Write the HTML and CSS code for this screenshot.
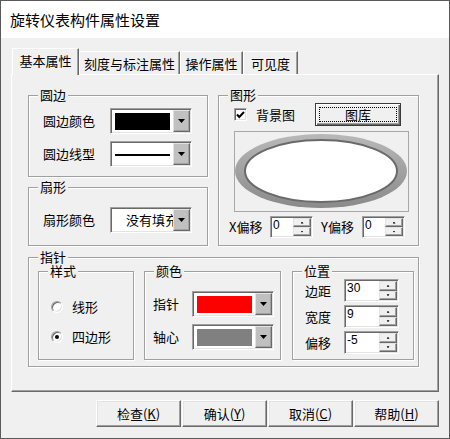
FILE: index.html
```html
<!DOCTYPE html>
<html lang="zh">
<head>
<meta charset="utf-8">
<title>旋转仪表构件属性设置</title>
<link rel="stylesheet" href="styles.css">
</head>
<body>
<div class="window">
  <div class="titlebar">旋转仪表构件属性设置</div>
  <div class="body">
    <div class="tabs">
      <div class="tab active t1">基本属性</div>
      <div class="tab t2">刻度与标注属性</div>
      <div class="tab t3">操作属性</div>
      <div class="tab t4">可见度</div>
    </div>
    <div class="panel">
      <div class="group g-rim">
        <span class="glabel">圆边</span>
        <div class="frow"><span class="flabel">圆边颜色</span>
          <div class="combo"><div class="cval"><span class="swatch sw-black"></span></div><span class="dd"></span></div>
        </div>
        <div class="frow"><span class="flabel">圆边线型</span>
          <div class="combo"><div class="cval cval-line"><span class="linestyle"></span></div><span class="dd"></span></div>
        </div>
      </div>

      <div class="group g-pic">
        <span class="glabel">图形</span>
        <div class="pic-row">
          <div class="chk-wrap"><span class="checkbox"><svg width="9" height="8" viewBox="0 0 9 8"><path d="M1 3.5 L3.3 6 L8 1" fill="none" stroke="#000" stroke-width="2"/></svg></span><span class="chk-label">背景图</span></div>
          <div class="btn-default">图库</div>
        </div>
        <div class="picframe">
          <svg width="173" height="79" viewBox="0 0 173 79">
            <defs>
              <linearGradient id="ring" x1="0" y1="0" x2="0" y2="1">
                <stop offset="0" stop-color="#b8b8b8"/>
                <stop offset="1" stop-color="#8a8a8a"/>
              </linearGradient>
            </defs>
            <ellipse cx="86" cy="39" rx="86" ry="37" fill="url(#ring)"/>
            <ellipse cx="86" cy="39" rx="76" ry="31" fill="#fff" stroke="#6a6a6a" stroke-width="2"/>
          </svg>
        </div>
        <div class="offset-row">
          <span class="olabel">X偏移</span>
          <div class="spin spin-sm"><span class="spin-val">0</span><span class="spin-btns"><span class="sb up"></span><span class="sb down"></span></span></div>
          <span class="olabel olabel-y">Y偏移</span>
          <div class="spin spin-sm"><span class="spin-val">0</span><span class="spin-btns"><span class="sb up"></span><span class="sb down"></span></span></div>
        </div>
      </div>

      <div class="group g-fan">
        <span class="glabel">扇形</span>
        <div class="frow"><span class="flabel">扇形颜色</span>
          <div class="combo"><div class="cval cval-text"><span class="ctext">没有填充</span></div><span class="dd"></span></div>
        </div>
      </div>

      <div class="group g-needle">
        <span class="glabel">指针</span>
        <div class="group sub s-style">
          <span class="glabel">样式</span>
          <div class="rrow"><span class="radio"></span><span>线形</span></div>
          <div class="rrow"><span class="radio on"></span><span>四边形</span></div>
        </div>
        <div class="group sub s-color">
          <span class="glabel">颜色</span>
          <div class="frow"><span class="flabel flabel-sm">指针</span>
            <div class="combo"><div class="cval"><span class="swatch sw-red"></span></div><span class="dd"></span></div>
          </div>
          <div class="frow"><span class="flabel flabel-sm">轴心</span>
            <div class="combo"><div class="cval"><span class="swatch sw-gray"></span></div><span class="dd"></span></div>
          </div>
        </div>
        <div class="group sub s-pos">
          <span class="glabel">位置</span>
          <div class="prow"><span class="flabel flabel-sm">边距</span>
            <div class="spin"><span class="spin-val">30</span><span class="spin-btns"><span class="sb up"></span><span class="sb down"></span></span></div>
          </div>
          <div class="prow"><span class="flabel flabel-sm">宽度</span>
            <div class="spin"><span class="spin-val">9</span><span class="spin-btns"><span class="sb up"></span><span class="sb down"></span></span></div>
          </div>
          <div class="prow"><span class="flabel flabel-sm">偏移</span>
            <div class="spin"><span class="spin-val">-5</span><span class="spin-btns"><span class="sb up"></span><span class="sb down"></span></span></div>
          </div>
        </div>
      </div>
    </div>
    <div class="buttons">
      <div class="btn">检查(<u>K</u>)</div>
      <div class="btn">确认(<u>Y</u>)</div>
      <div class="btn">取消(<u>C</u>)</div>
      <div class="btn">帮助(<u>H</u>)</div>
    </div>
  </div>
</div>
</body>
</html>
```

FILE: styles.css
```css
* { box-sizing: border-box; }
html, body { margin: 0; padding: 0; background: #f0f0f0; }
body {
  font-family: "Noto Sans CJK SC", "Liberation Sans", sans-serif;
  font-size: 13px;
  color: #000;
}
.window {
  width: 450px;
  height: 439px;
  border: 1px solid #5a5a5a;
  background: #f0f0f0;
  display: flex;
  flex-direction: column;
}
.titlebar {
  height: 37px;
  flex: none;
  background: #fff;
  display: flex;
  align-items: center;
  padding-left: 9px;
  font-size: 15px;
  padding-bottom: 1px;
}
.body {
  padding: 10px 10px 0 10px;
  display: flex;
  flex-direction: column;
}
/* tabs */
.tabs {
  display: flex;
  align-items: flex-end;
  height: 26px;
  padding-left: 1px;
  position: relative;
  z-index: 2;
}
.tab {
  height: 23px;
  display: flex;
  align-items: center;
  justify-content: center;
  line-height: 16px;
  border-top: 1px solid #fff;
  border-left: 1px solid #fff;
  border-right: 1px solid #696969;
  box-shadow: inset -1px 0 #a0a0a0;
  background: #f0f0f0;
  padding-top: 1px;
}
.tab.active {
  height: 27px;
  margin-bottom: -1px;
  padding-bottom: 3px;
}
.t1 { width: 67px; }
.t2 { width: 101px; }
.t3 { width: 63px; }
.t4 { width: 55px; }
.panel {
  height: 318px;
  border-top: 1px solid #fff;
  border-left: 1px solid #fff;
  border-right: 1px solid #696969;
  border-bottom: 1px solid #696969;
  box-shadow: inset -1px -1px #a0a0a0;
  padding: 20px 0 0 16px;
  display: grid;
  grid-template-columns: 180px 201px;
  grid-template-rows: 82px 59px 111px;
  column-gap: 10px;
  row-gap: 10px;
  align-content: start;
}
/* group boxes */
.group {
  position: relative;
  border: 1px solid #a0a0a0;
  box-shadow: 1px 1px 0 #fff, inset 1px 1px 0 #fff;
}
.glabel {
  position: absolute;
  top: -8px;
  left: 9px;
  padding: 0 2px;
  line-height: 14px;
  background: #f0f0f0;
}
.g-rim {
  grid-column: 1; grid-row: 1;
  padding: 12px 0 0 14px;
  display: flex; flex-direction: column; gap: 7px;
}
.g-fan {
  grid-column: 1; grid-row: 2;
  padding: 19px 0 0 14px;
}
.g-pic {
  grid-column: 2; grid-row: 1 / span 2;
  padding: 7px 0 0 10px;
}
.g-needle {
  grid-column: 1 / span 2; grid-row: 3;
  margin-top: 1px;
  padding: 13px 0 0 9px;
  display: flex;
  align-items: flex-start;
}
.sub { height: 89px; flex: none; }
.s-style { width: 96px; padding: 27px 0 0 12px; display: flex; flex-direction: column; gap: 14px; }
.s-color { width: 137px; margin-left: 10px; padding: 19px 0 0 8px; display: flex; flex-direction: column; gap: 7px; }
.s-pos { width: 122px; margin-left: 11px; padding: 7px 0 0 12px; display: flex; flex-direction: column; gap: 3px; }

.frow { display: flex; align-items: center; height: 26px; }
.flabel { width: 67px; line-height: 16px; flex: none; }
.flabel-sm { width: 39px; }
.prow { display: flex; align-items: center; height: 23px; }

/* combo */
.combo {
  width: 82px;
  height: 26px;
  display: flex;
  background: #fff;
  border: 1px solid;
  border-color: #a0a0a0 #fff #fff #a0a0a0;
  box-shadow: inset 1px 1px #696969, inset -1px -1px #e3e3e3;
  padding: 1px;
  flex: none;
}
.cval {
  flex: 1;
  display: flex;
  padding: 3px 3px 2px 3px;
  overflow: hidden;
}
.swatch { flex: 1; }
.sw-black { background: #000; }
.sw-red { background: #ff0000; }
.sw-gray { background: #808080; }
.cval-line { align-items: center; padding-top: 4px; }
.linestyle { flex: 1; height: 2px; background: #000; }
.cval-text { padding: 0 0 0 14px; align-items: center; white-space: nowrap; }
.ctext { line-height: 16px; }
.dd {
  width: 17px;
  height: 22px;
  flex: none;
  background: #c0c0c0;
  border: 1px solid;
  border-color: #e3e3e3 #696969 #696969 #e3e3e3;
  box-shadow: inset -1px -1px #a0a0a0;
  display: flex;
  align-items: center;
  justify-content: center;
}
.dd::after {
  content: "";
  width: 7px;
  height: 4px;
  background: #000;
  clip-path: polygon(0 0, 100% 0, 50% 100%);
}

/* spin edits */
.spin {
  width: 55px;
  height: 23px;
  display: flex;
  background: #fff;
  border: 1px solid;
  border-color: #a0a0a0 #fff #fff #a0a0a0;
  box-shadow: inset 1px 1px #696969, inset -1px -1px #e3e3e3;
  padding: 1px;
  flex: none;
}
.spin-sm { width: 43px; height: 22px; }
.spin-val {
  flex: 1;
  font-family: "Liberation Sans", sans-serif;
  font-size: 12px;
  line-height: 14px;
  padding-left: 1px;
}
.spin-btns { width: 18px; display: flex; flex-direction: column; flex: none; }
.sb {
  flex: 1;
  background: #f0f0f0;
  border: 1px solid;
  border-color: #e3e3e3 #696969 #696969 #e3e3e3;
  box-shadow: inset -1px -1px #a0a0a0;
  display: flex;
  align-items: center;
  justify-content: center;
}
.sb::after {
  content: "";
  width: 3px;
  height: 2px;
  background: #000;
}
.sb.up::after { clip-path: polygon(50% 0, 100% 100%, 0 100%); }
.sb.down::after { clip-path: polygon(0 0, 100% 0, 50% 100%); }

/* picture group */
.pic-row {
  display: flex;
  align-items: center;
  justify-content: space-between;
  width: 167px;
  height: 23px;
  margin-left: 5px;
}
.chk-wrap { display: flex; align-items: center; }
.checkbox {
  width: 13px;
  height: 13px;
  background: #fff;
  border: 1px solid;
  border-color: #a0a0a0 #fff #fff #a0a0a0;
  box-shadow: inset 1px 1px #696969, inset -1px -1px #e3e3e3;
  display: flex;
  align-items: center;
  justify-content: center;
}
.chk-label { margin-left: 9px; line-height: 16px; }
.btn-default {
  width: 86px;
  height: 23px;
  border: 1px solid #3a3a3a;
  box-shadow: inset 1px 1px #fff, inset -1px -1px #696969, inset -2px -2px #a0a0a0;
  display: flex;
  align-items: center;
  justify-content: center;
  position: relative;
  line-height: 16px;
}
.btn-default::after {
  content: "";
  position: absolute;
  inset: 3px;
  border: 1px dotted #000;
}
.picframe {
  width: 175px;
  height: 81px;
  margin: 5px 0 0 5px;
  border: 1px solid #a8a8a8;
  background: #f0f0f0;
}
.picframe svg { display: block; }
.offset-row {
  display: flex;
  align-items: center;
  margin-top: 4px;
  height: 22px;
}
.olabel { width: 41px; line-height: 16px; flex: none; }
.olabel-y { margin-left: 8px; }

/* radios */
.rrow { display: flex; align-items: center; height: 16px; gap: 9px; line-height: 16px; }
.radio {
  width: 12px;
  height: 12px;
  border-radius: 50%;
  background: #fff;
  border: 1px solid;
  border-color: #a0a0a0 #fff #fff #a0a0a0;
  box-shadow: inset 1px 1px #696969, inset -1px -1px #e3e3e3;
  display: flex;
  align-items: center;
  justify-content: center;
  flex: none;
}
.radio.on::after {
  content: "";
  width: 4px;
  height: 4px;
  border-radius: 50%;
  background: #000;
}

/* bottom buttons */
.buttons {
  display: flex;
  justify-content: flex-end;
  gap: 1px;
  margin-top: 8px;
}
.btn {
  width: 85px;
  height: 27px;
  display: flex;
  align-items: center;
  justify-content: center;
  border: 1px solid;
  border-color: #fff #696969 #696969 #fff;
  box-shadow: inset -1px -1px #a0a0a0, inset 1px 1px #e3e3e3;
  line-height: 16px;
}
.btn u { text-decoration: underline; }
```
